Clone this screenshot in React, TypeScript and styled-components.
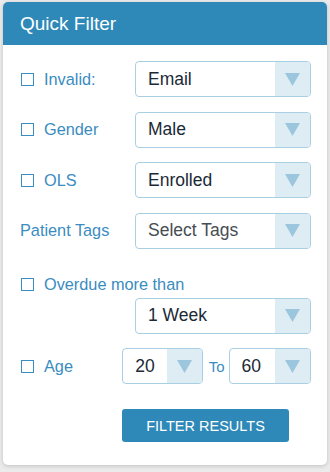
import styled, { createGlobalStyle } from 'styled-components'

const Global = createGlobalStyle`
  html, body {
    margin: 0;
    padding: 0;
    background: #ebebeb;
    font-family: "Liberation Sans", Arial, sans-serif;
  }
`

const Page = styled.div`
  width: 330px;
  height: 472px;
  padding: 2px 3px 0 3px;
  box-sizing: border-box;
`

const Card = styled.div`
  width: 324px;
  height: 463px;
  background: #fff;
  border-radius: 5px;
  overflow: hidden;
  box-shadow: 0 1px 4px rgba(0, 0, 0, 0.18);
  display: flex;
  flex-direction: column;
`

const Header = styled.div`
  height: 43px;
  background: #2e89b8;
  color: #fff;
  font-size: 19px;
  display: flex;
  align-items: center;
  padding-left: 17px;
`

const Body = styled.div`
  padding: 16px 16px 0 17px;
  display: flex;
  flex-direction: column;
`

const Row = styled.div<{ $gap?: number }>`
  display: grid;
  grid-template-columns: 115px 1fr;
  align-items: center;
  margin-bottom: ${p => p.$gap ?? 14.5}px;
`

const LabelRow = styled.div`
  height: 20px;
  display: flex;
  align-items: center;
  margin: 26px 0 3px 0;
`

const Label = styled.label`
  display: flex;
  align-items: center;
  gap: 10px;
  color: #3a8cc1;
  font-size: 16.3px;
  white-space: nowrap;
`

const Check = styled.input`
  appearance: none;
  margin: 0 0 0 1px;
  width: 13px;
  height: 13px;
  border: 1.5px solid #3a8cc1;
  box-sizing: border-box;
  background: #fff;
`

const SelectBox = styled.div<{ $width?: number }>`
  height: 36px;
  box-sizing: border-box;
  border: 1px solid #a9cfe3;
  border-radius: 4px;
  display: flex;
  overflow: hidden;
  background: #fff;
  width: ${p => (p.$width ? `${p.$width}px` : 'auto')};
`

const Value = styled.div<{ $muted?: boolean }>`
  flex: 1;
  display: flex;
  align-items: center;
  padding-left: 12px;
  font-size: 17.5px;
  color: ${p => (p.$muted ? '#474d52' : '#1b2a36')};
`

const ArrowBox = styled.div`
  width: 35px;
  background: #deedf4;
  display: flex;
  align-items: center;
  justify-content: center;
`

const Indent = styled.div`
  margin-left: 115px;
  margin-bottom: 14.5px;
`

const AgeRow = styled.div`
  display: flex;
  align-items: center;
  margin-bottom: 25px;
`

const AgeLabel = styled(Label)`
  width: 103px;
`

const ToText = styled.span`
  color: #3a8cc1;
  font-size: 15px;
  margin: 0 4px 0 6px;
`

const Button = styled.button`
  margin-left: 102px;
  width: 167px;
  height: 33px;
  border: none;
  border-radius: 3px;
  background: #2e89b8;
  color: #fff;
  font-family: "Liberation Sans", Arial, sans-serif;
  font-size: 14.5px;
  padding: 0;
`

function Arrow() {
  return (
    <ArrowBox>
      <svg width="15" height="13" viewBox="0 0 15 13">
        <polygon points="0,0 15,0 7.5,13" fill="#9cc6dd" />
      </svg>
    </ArrowBox>
  )
}

function Select({ value, muted, width }: { value: string; muted?: boolean; width?: number }) {
  return (
    <SelectBox $width={width}>
      <Value $muted={muted}>{value}</Value>
      <Arrow />
    </SelectBox>
  )
}

const rows = [
  { label: 'Invalid:', value: 'Email' },
  { label: 'Gender', value: 'Male' },
  { label: 'OLS', value: 'Enrolled' },
]

const App: React.FC = () => {
  return (
    <>
      <Global />
      <Page>
        <Card>
          <Header>Quick Filter</Header>
          <Body>
            {rows.map(r => (
              <Row key={r.label}>
                <Label><Check type="checkbox" />{r.label}</Label>
                <Select value={r.value} />
              </Row>
            ))}
            <Row $gap={0}>
              <Label>Patient Tags</Label>
              <Select value="Select Tags" muted />
            </Row>
            <LabelRow>
              <Label><Check type="checkbox" />Overdue more than</Label>
            </LabelRow>
            <Indent>
              <Select value="1 Week" />
            </Indent>
            <AgeRow>
              <AgeLabel><Check type="checkbox" />Age</AgeLabel>
              <Select value="20" width={81} />
              <ToText>To</ToText>
              <Select value="60" width={83} />
            </AgeRow>
            <Button>FILTER RESULTS</Button>
          </Body>
        </Card>
      </Page>
    </>
  )
}

export default App
